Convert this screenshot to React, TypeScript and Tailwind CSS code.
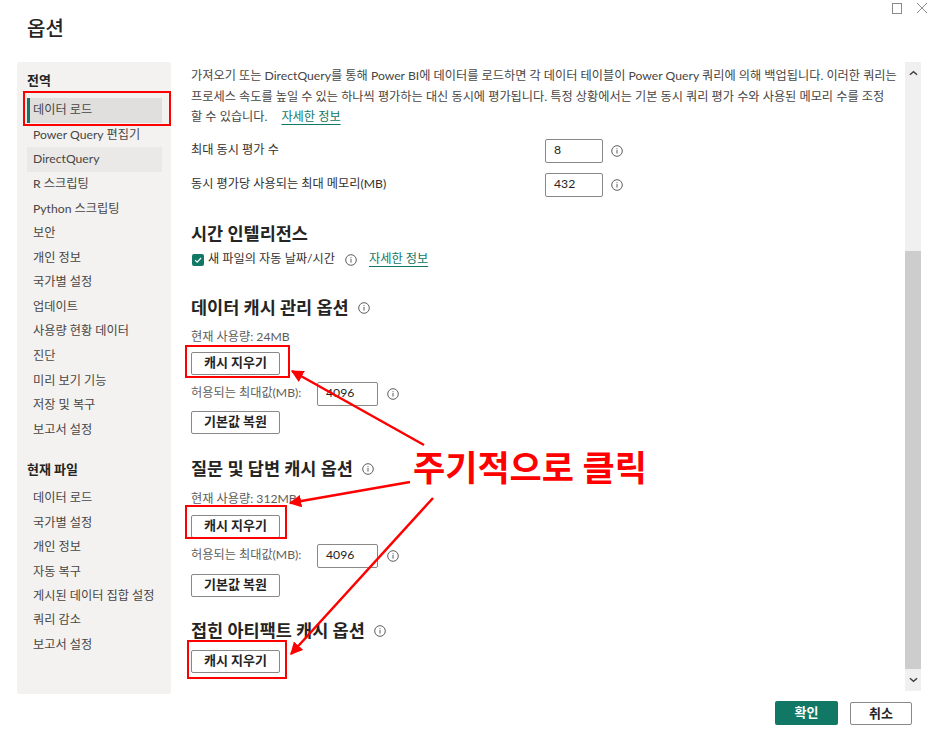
import React from "react"

const font = "font-['Lato','Noto_Sans_CJK_KR',sans-serif]"

const globalItems = [
  "데이터 로드",
  "Power Query 편집기",
  "DirectQuery",
  "R 스크립팅",
  "Python 스크립팅",
  "보안",
  "개인 정보",
  "국가별 설정",
  "업데이트",
  "사용량 현황 데이터",
  "진단",
  "미리 보기 기능",
  "저장 및 복구",
  "보고서 설정",
]

const fileItems = ["데이터 로드", "국가별 설정", "개인 정보", "자동 복구", "게시된 데이터 집합 설정", "쿼리 감소", "보고서 설정"]

function InfoIcon({ className = "" }: { className?: string }) {
  return (
    <svg viewBox="0 0 12 12" className={`w-[12px] h-[12px] shrink-0 ${className}`}>
      <circle cx="6" cy="6" r="5.3" fill="none" stroke="#605e5c" strokeWidth="1" />
      <rect x="5.5" y="5" width="1" height="3.6" fill="#605e5c" />
      <rect x="5.5" y="3.2" width="1" height="1" fill="#605e5c" />
    </svg>
  )
}

function Btn({ label }: { label: string }) {
  return (
    <div className="w-[89px] h-[23px] flex items-center justify-center border border-[#8a8886] rounded-[2px] bg-white text-[13px] font-bold text-[#252423]">
      {label}
    </div>
  )
}

function NumInput({ value, w = "w-[58px]" }: { value: string; w?: string }) {
  return (
    <div className={`${w} h-[24px] flex items-center pl-[8px] border border-[#8a8886] rounded-[2px] bg-white text-[12.2px] text-[#252423]`}>
      {value}
    </div>
  )
}

function NavItem({ label, active, hover }: { label: string; active?: boolean; hover?: boolean }) {
  return (
    <div
      className={`relative h-[24.6px] flex items-center pl-[6px] text-[12.2px] text-[#484644] ${
        active ? "bg-[#e1dfdd]" : hover ? "bg-[#ebe9e7]" : ""
      }`}
    >
      {active && <div className="absolute left-0 top-0 bottom-0 w-[3px] bg-[#117865]" />}
      {label}
    </div>
  )
}

export default function App() {
  return (
    <div className={`relative w-[936px] h-[744px] bg-white overflow-hidden flex flex-col ${font}`}>
      {/* 창 버튼 */}
      <div className="absolute top-[2px] right-[8px] flex items-center gap-[14px]">
        <div className="w-[10px] h-[11px] border border-[#8a8a8a]" />
        <svg viewBox="0 0 12 12" className="w-[12px] h-[12px]">
          <path d="M1 1 L11 11 M11 1 L1 11" stroke="#8a8a8a" strokeWidth="1" />
        </svg>
      </div>

      {/* 제목 */}
      <div className="h-[62px] pl-[27px] pt-[14px]">
        <div className="text-[20px] leading-[28px] font-medium text-[#252423]">옵션</div>
      </div>

      <div className="flex h-[632px]">
        {/* 사이드바 */}
        <div className="ml-[17px] w-[154px] h-[632px] bg-[#f3f2f1] rounded-[2px] px-[10px] pt-[9px] shrink-0">
          <div className="text-[13px] font-bold leading-[18px] text-[#252423]">전역</div>
          <div className="mt-[9px] mr-[-1px]">
            {globalItems.map((it, i) => (
              <NavItem key={i} label={it} active={i === 0} hover={i === 2} />
            ))}
          </div>
          <div className="mt-[18px] text-[13px] font-bold leading-[18px] text-[#252423]">현재 파일</div>
          <div className="mt-[8px]">
            {fileItems.map((it, i) => (
              <div key={i} className="h-[24.4px] flex items-center pl-[6px] text-[12.2px] text-[#484644]">
                {it}
              </div>
            ))}
          </div>
        </div>

        {/* 본문 */}
        <div className="ml-[20px] flex-1 overflow-hidden text-[12.2px] text-[#323130]">
          <div className="mt-[4px] leading-[20.5px] text-[#484644] whitespace-nowrap">
            <div>가져오기 또는 DirectQuery를 통해 Power BI에 데이터를 로드하면 각 데이터 테이블이 Power Query 쿼리에 의해 백업됩니다. 이러한 쿼리는</div>
            <div>프로세스 속도를 높일 수 있는 하나씩 평가하는 대신 동시에 평가됩니다. 특정 상황에서는 기본 동시 쿼리 평가 수와 사용된 메모리 수를 조정</div>
            <div>
              할 수 있습니다.
              <span className="ml-[14px] text-[#117865] underline underline-offset-[3px]">자세한 정보</span>
            </div>
          </div>

          <div className="mt-[11px] flex items-center h-[24px]">
            <div className="w-[354px]">최대 동시 평가 수</div>
            <NumInput value="8" />
            <InfoIcon className="ml-[8px]" />
          </div>
          <div className="mt-[10px] flex items-center h-[24px]">
            <div className="w-[354px]">동시 평가당 사용되는 최대 메모리(MB)</div>
            <NumInput value="432" />
            <InfoIcon className="ml-[8px]" />
          </div>

          <div className="mt-[26px] text-[17.5px] leading-[22px] font-bold text-[#252423]">시간 인텔리전스</div>
          <div className="mt-[6px] h-[18px] flex items-center">
            <div className="w-[12px] h-[12px] ml-[1px] bg-[#117865] rounded-[2px] flex items-center justify-center">
              <svg viewBox="0 0 12 12" className="w-[10px] h-[10px]">
                <path d="M2.5 6.2 L5 8.5 L9.6 3.6" fill="none" stroke="white" strokeWidth="1.4" />
              </svg>
            </div>
            <span className="ml-[4px]">새 파일의 자동 날짜/시간</span>
            <InfoIcon className="ml-[10px]" />
            <span className="ml-[12px] text-[#117865] underline underline-offset-[3px]">자세한 정보</span>
          </div>

          <div className="mt-[28px] flex items-center h-[22px]">
            <span className="text-[17.5px] leading-[22px] font-bold text-[#252423]">데이터 캐시 관리 옵션</span>
            <InfoIcon className="ml-[9px]" />
          </div>
          <div className="mt-[9px] leading-[18px] text-[#605e5c]">현재 사용량: 24MB</div>
          <div className="mt-[6px]">
            <Btn label="캐시 지우기" />
          </div>
          <div className="mt-[7px] flex items-center h-[24px]">
            <div className="w-[126px] text-[#605e5c]">허용되는 최대값(MB):</div>
            <NumInput value="4096" w="w-[61px]" />
            <InfoIcon className="ml-[9px]" />
          </div>
          <div className="mt-[5px]">
            <Btn label="기본값 복원" />
          </div>

          <div className="mt-[24px] flex items-center h-[22px]">
            <span className="text-[17.5px] leading-[22px] font-bold text-[#252423]">질문 및 답변 캐시 옵션</span>
            <InfoIcon className="ml-[9px]" />
          </div>
          <div className="mt-[10px] leading-[18px] text-[#605e5c]">현재 사용량: 312MB</div>
          <div className="mt-[7px]">
            <Btn label="캐시 지우기" />
          </div>
          <div className="mt-[6px] flex items-center h-[24px]">
            <div className="w-[126px] text-[#605e5c]">허용되는 최대값(MB):</div>
            <NumInput value="4096" w="w-[61px]" />
            <InfoIcon className="ml-[9px]" />
          </div>
          <div className="mt-[6px]">
            <Btn label="기본값 복원" />
          </div>

          <div className="mt-[23px] flex items-center h-[22px]">
            <span className="text-[17.5px] leading-[22px] font-bold text-[#252423]">접힌 아티팩트 캐시 옵션</span>
            <InfoIcon className="ml-[9px]" />
          </div>
          <div className="mt-[8px]">
            <Btn label="캐시 지우기" />
          </div>
        </div>

        {/* 스크롤바 */}
        <div className="w-[16px] h-[629px] mr-[15px] bg-[#f0f0f0] flex flex-col shrink-0">
          <div className="h-[22px] flex items-center justify-center">
            <svg viewBox="0 0 10 6" className="w-[9px] h-[6px]">
              <path d="M1 5 L5 1.5 L9 5" fill="none" stroke="#404040" strokeWidth="1.6" />
            </svg>
          </div>
          <div className="h-[167px]" />
          <div className="flex-1 bg-[#cdcdcd]" />
          <div className="h-[22px] flex items-center justify-center">
            <svg viewBox="0 0 10 6" className="w-[9px] h-[6px]">
              <path d="M1 1 L5 4.5 L9 1" fill="none" stroke="#404040" strokeWidth="1.6" />
            </svg>
          </div>
        </div>
      </div>

      {/* 하단 버튼 */}
      <div className="flex-1 flex items-start justify-end pr-[24px] pt-[7px] gap-[12px]">
        <div className="w-[63px] h-[24px] bg-[#117865] rounded-[2px] flex items-center justify-center text-[13px] font-bold text-white">
          확인
        </div>
        <div className="w-[62px] h-[23px] mt-[1px] bg-white border border-[#8a8886] rounded-[2px] flex items-center justify-center text-[13px] font-bold text-[#252423]">
          취소
        </div>
      </div>

      {/* 주석 표시 */}
      <div className="absolute left-[23px] top-[91px] w-[148px] h-[35px] border-[2px] border-[#ff0000]" />
      <div className="absolute left-[185px] top-[345px] w-[105px] h-[33px] border-[2px] border-[#ff0000]" />
      <div className="absolute left-[185px] top-[505px] w-[102px] h-[34px] border-[2px] border-[#ff0000]" />
      <div className="absolute left-[187px] top-[640px] w-[100px] h-[39px] border-[2px] border-[#ff0000]" />

      <div className="absolute left-[413px] top-[444px] text-[35px] leading-[46px] font-bold text-[#ff0000] whitespace-nowrap">
        주기적으로 클릭
      </div>

      <svg className="absolute inset-0 pointer-events-none" width="936" height="744" viewBox="0 0 936 744">
        <defs>
          <marker id="ah" viewBox="0 0 10 10" refX="9" refY="5" markerWidth="5" markerHeight="5" orient="auto">
            <path d="M0 0 L10 5 L0 10 z" fill="#ff0000" />
          </marker>
        </defs>
        <line x1="424" y1="445" x2="292" y2="371" stroke="#ff0000" strokeWidth="2.5" markerEnd="url(#ah)" />
        <line x1="410" y1="482" x2="290" y2="503" stroke="#ff0000" strokeWidth="2.5" markerEnd="url(#ah)" />
        <line x1="433" y1="498" x2="291" y2="654" stroke="#ff0000" strokeWidth="2.5" markerEnd="url(#ah)" />
      </svg>
    </div>
  )
}
